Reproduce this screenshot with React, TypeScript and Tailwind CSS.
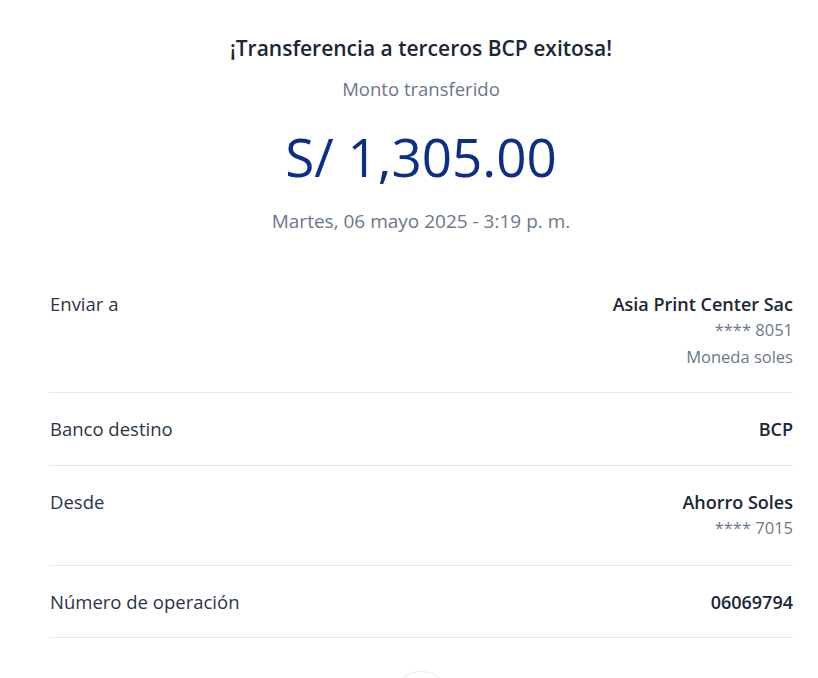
export default function App() {
  const rows = [
    { label: "Enviar a", value: "Asia Print Center Sac", sub: ["**** 8051", "Moneda soles"] },
    { label: "Banco destino", value: "BCP", sub: [] },
    { label: "Desde", value: "Ahorro Soles", sub: ["**** 7015"] },
    { label: "Número de operación", value: "06069794", sub: [] },
  ];

  return (
    <div
      className="min-h-screen w-full bg-white overflow-hidden"
      style={{ fontFamily: '"Open Sans", "Noto Sans", sans-serif' }}
    >
      <div className="mx-[49px] w-[744px] flex flex-col items-center pt-[34px]">
        <h1 className="text-[21px] leading-[28px] font-semibold text-[#1b2636] whitespace-nowrap">
          ¡Transferencia a terceros BCP exitosa!
        </h1>
        <p className="mt-[14px] text-[18.5px] leading-[26px] text-[#6b778a]">Monto transferido</p>
        <p className="mt-[23px] text-[53px] leading-[64px] text-[#0c2e86]">S/ 1,305.00</p>
        <p className="mt-[19px] text-[19px] leading-[26px] text-[#6b778a]">
          Martes, 06 mayo 2025 - 3:19 p. m.
        </p>
      </div>

      {/* Detail rows */}
      <div className="mx-[49px] mt-[34px] w-[744px]">
        {rows.map((r, i) => (
          <div
            key={r.label}
            className={`flex justify-between border-b border-[#e6e8ec] pt-[23px] ${
              i === 0 ? "pb-[22px]" : i === 3 ? "pb-[22px]" : "pb-[23px]"
            }`}
          >
            <span className="text-[18.5px] leading-[26px] text-[#2a3546] pl-[1px]">{r.label}</span>
            <div className="flex flex-col items-end">
              <span className="text-[18px] leading-[26px] font-semibold text-[#1b2636]">
                {r.value}
              </span>
              {r.sub.map((s) => (
                <span key={s} className="text-[16.5px] leading-[26.5px] text-[#6b778a]">
                  {s}
                </span>
              ))}
            </div>
          </div>
        ))}
      </div>

      <div className="flex justify-center mx-[49px] w-[744px] mt-[33px]">
        <div className="h-[56px] w-[56px] rounded-full border border-[#eceef1] shadow-sm" />
      </div>
    </div>
  );
}
